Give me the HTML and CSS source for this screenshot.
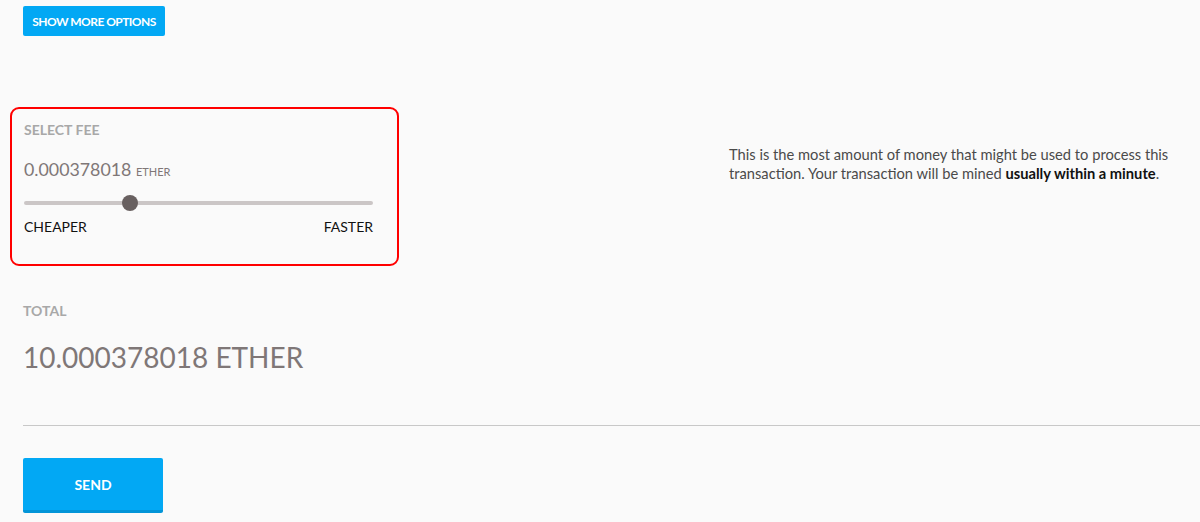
FILE: index.html
```html
<!DOCTYPE html>
<html>
<head>
<meta charset="utf-8">
<link rel="stylesheet" href="styles.css">
</head>
<body>
<div class="page">
  <button class="btn-small">SHOW MORE OPTIONS</button>
  <div class="fee-row">
    <div class="fee-box">
      <div class="label">SELECT FEE</div>
      <div class="fee-value">0.000378018 <span class="unit">ETHER</span></div>
      <div class="slider"><div class="track"></div><div class="thumb"></div></div>
      <div class="ends"><span>CHEAPER</span><span>FASTER</span></div>
    </div>
    <p class="info">This is the most amount of money that might be used to process this transaction. Your transaction will be mined <strong>usually within a minute</strong>.</p>
  </div>
  <div class="total">
    <div class="label">TOTAL</div>
    <div class="total-value">10.000378018 ETHER</div>
  </div>
  <hr class="divider">
  <button class="btn-send">SEND</button>
</div>
</body>
</html>
```
FILE: styles.css
```css
html, body { margin: 0; padding: 0; background: #fafafa; }
body { font-family: Lato, "Noto Sans", sans-serif; color: #222; }
.page { padding: 6px 0 0 23px; width: 1177px; }
button { font-family: inherit; border: 0; color: #fff; background: #02a8f4; cursor: pointer; }
.btn-small { display: block; height: 30px; width: 142px; padding: 0; font-size: 12px; font-weight: 700; border-radius: 2px; letter-spacing: -0.55px; }
.fee-row { display: grid; grid-template-columns: 389px 1fr; column-gap: 330px; margin: 71px 0 0 -13px; align-items: start; }
.fee-box { border: 2px solid #f00; border-radius: 9px; height: 159px; box-sizing: border-box; padding: 13px 24px 0 12px; }
.label { font-size: 14px; font-weight: 700; color: #a8a8a8; line-height: 16px; }
.fee-value { margin-top: 21px; font-size: 17.8px; color: #7f7777; line-height: 20px; }
.unit { font-size: 11px; }
.slider { position: relative; height: 16px; margin-top: 13px; }
.track { position: absolute; left: 0; right: 0; top: 6px; height: 4px; border-radius: 2px; background: #cbc6c6; }
.thumb { position: absolute; left: 98px; top: 0; width: 16px; height: 16px; border-radius: 50%; background: #686060; }
.ends { display: flex; justify-content: space-between; margin-top: 7px; font-size: 14px; color: #111; line-height: 18px; }
.info { margin: 38px 0 0 0; font-size: 14.7px; line-height: 19px; color: #4a4a4a; }
.info strong { color: #111; }
.total { margin-top: 37px; }
.total-value { margin-top: 22px; font-size: 28px; color: #7f7777; line-height: 32px; }
.divider { margin: 52px 0 0 0; border: 0; border-top: 1px solid #c8c8c8; height: 0; }
.btn-send { display: block; margin-top: 32px; width: 140px; height: 55px; font-size: 14px; font-weight: 700; border-radius: 2px; border-bottom: 3px solid #0395d8; }
```
